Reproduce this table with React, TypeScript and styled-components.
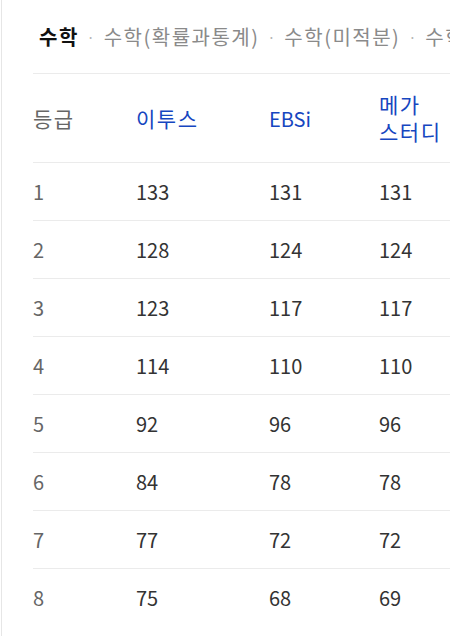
import React from 'react';
import styled, { createGlobalStyle } from 'styled-components';

const GlobalStyle = createGlobalStyle`
  html, body {
    margin: 0;
    padding: 0;
    background: #fff;
    overflow: hidden;
  }
  body {
    font-family: "Noto Sans CJK KR", "Noto Sans", sans-serif;
  }
`;

const Page = styled.div`
  margin-left: 1px;
  border-left: 1px solid #e6e6e6;
  padding-left: 31px;
  height: 636px;
  overflow: hidden;
`;

const Tabs = styled.div`
  display: flex;
  align-items: center;
  height: 74px;
  padding-left: 6px;
  white-space: nowrap;
  border-bottom: 1px solid #ebebeb;
  box-sizing: border-box;
  width: 600px;
`;

const Tab = styled.span<{ $active?: boolean }>`
  font-size: 20px;
  letter-spacing: 1.5px;
  color: ${(p) => (p.$active ? '#111' : '#8a8a8a')};
  font-weight: ${(p) => (p.$active ? 700 : 400)};
`;

const Dot = styled.span`
  color: #b5b5b5;
  font-size: 14px;
  margin: 0 9px 0 8px;
`;

const Table = styled.table`
  border-collapse: collapse;
  table-layout: fixed;
  width: 600px;
`;

const HeadCell = styled.th<{ $blue?: boolean }>`
  height: 88px;
  padding: 0;
  text-align: left;
  font-weight: 400;
  font-size: 21px;
  letter-spacing: 1.5px;
  line-height: 27px;
  color: ${(p) => (p.$blue ? '#1646c0' : '#666')};
  border-bottom: 1px solid #ebebeb;
  vertical-align: middle;
`;

const EnHead = styled.span`
  letter-spacing: 0;
  font-size: 20px;
`;

const Cell = styled.td<{ $grade?: boolean }>`
  height: 57px;
  padding: 0;
  font-size: 20px;
  color: ${(p) => (p.$grade ? '#666' : '#333')};
  border-bottom: 1px solid #ebebeb;
  vertical-align: middle;
  tr:last-child > & {
    border-bottom: none;
  }
`;

const rows = [
  ['1', '133', '131', '131'],
  ['2', '128', '124', '124'],
  ['3', '123', '117', '117'],
  ['4', '114', '110', '110'],
  ['5', '92', '96', '96'],
  ['6', '84', '78', '78'],
  ['7', '77', '72', '72'],
  ['8', '75', '68', '69'],
];

export default function App() {
  return (
    <Page>
      <GlobalStyle />
      <Tabs>
        <Tab $active>수학</Tab>
        <Dot>·</Dot>
        <Tab>수학(확률과통계)</Tab>
        <Dot>·</Dot>
        <Tab>수학(미적분)</Tab>
        <Dot>·</Dot>
        <Tab>수학(기하)</Tab>
      </Tabs>
      <Table>
        <colgroup>
          <col style={{ width: 103 }} />
          <col style={{ width: 133 }} />
          <col style={{ width: 110 }} />
          <col />
        </colgroup>
        <thead>
          <tr>
            <HeadCell>등급</HeadCell>
            <HeadCell $blue>이투스</HeadCell>
            <HeadCell $blue>
              <EnHead>EBSi</EnHead>
            </HeadCell>
            <HeadCell $blue>
              메가
              <br />
              스터디
            </HeadCell>
          </tr>
        </thead>
        <tbody>
          {rows.map((r) => (
            <tr key={r[0]}>
              <Cell $grade>{r[0]}</Cell>
              <Cell>{r[1]}</Cell>
              <Cell>{r[2]}</Cell>
              <Cell>{r[3]}</Cell>
            </tr>
          ))}
        </tbody>
      </Table>
    </Page>
  );
}
